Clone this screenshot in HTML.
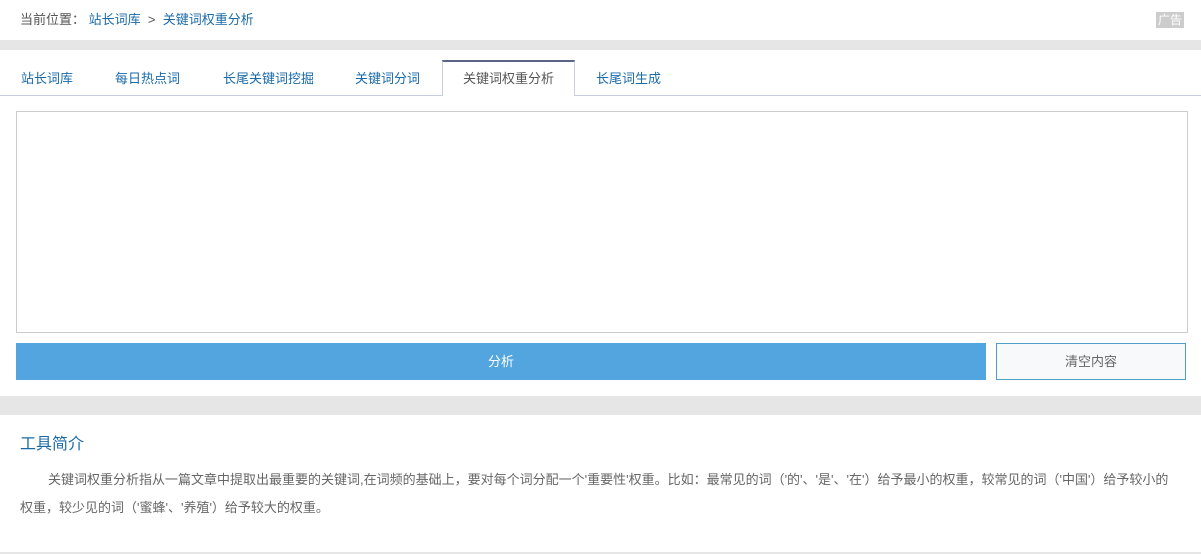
<!DOCTYPE html>
<html><head><meta charset="utf-8"><style>
*{margin:0;padding:0;box-sizing:border-box}
body{width:1201px;height:554px;background:#e6e6e6;font-family:"Liberation Sans","Noto Sans CJK SC",sans-serif;font-size:13px;position:relative;overflow:hidden}
.a{position:absolute}
.top{left:0;top:0;width:1201px;height:40px;background:#fff}
.bc{left:20px;top:9px;color:#555}
.bc span{color:#1a6aa8}
.ad{left:1156px;top:12px;width:28px;height:16px;background:#ccc;color:#fff;font-size:12px;line-height:16px;text-align:center}
.p1{left:0;top:50px;width:1201px;height:346px;background:#fff}
.tabline{left:0;top:95px;width:1201px;height:1px;background:#c8cfdc}
.tab{top:68px;color:#1a6aa8}
.act{left:442px;top:60px;width:133px;height:36px;background:#fff;border:1px solid #c8cfdc;border-top:2px solid #5b6584;border-bottom:none;color:#555;text-align:center;line-height:34px}
.ta{left:16px;top:111px;width:1172px;height:222px;border:1px solid #ccc}
.btn{left:16px;top:343px;width:970px;height:37px;background:#53a5e0;color:#fff;text-align:center;line-height:37px}
.clr{left:996px;top:343px;width:190px;height:37px;background:#f7f9fa;border:1px solid #4fa0c7;color:#666;text-align:center;line-height:35px}
.p2{left:0;top:415px;width:1201px;height:137px;background:#fff}
.h{left:20px;top:430px;font-size:16px;color:#1a6aa8}
.txt{left:20px;top:466px;width:1158px;color:#666;line-height:28px;text-indent:28px;font-size:13px}
</style></head><body>
<div class="a top"></div>
<div class="a bc">当前位置：&nbsp;<span>站长词库</span>&nbsp;&nbsp;&gt;&nbsp;&nbsp;<span>关键词权重分析</span></div>
<div class="a ad">广告</div>
<div class="a p1"></div>
<div class="a tabline"></div>
<div class="a tab" style="left:21px">站长词库</div>
<div class="a tab" style="left:115px">每日热点词</div>
<div class="a tab" style="left:223px">长尾关键词挖掘</div>
<div class="a tab" style="left:355px">关键词分词</div>
<div class="a act">关键词权重分析</div>
<div class="a tab" style="left:596px">长尾词生成</div>
<div class="a ta"></div>
<div class="a btn">分析</div>
<div class="a clr">清空内容</div>
<div class="a p2"></div>
<div class="a h">工具简介</div>
<div class="a txt">关键词权重分析指从一篇文章中提取出最重要的关键词,在词频的基础上，要对每个词分配一个'重要性'权重。比如：最常见的词（'的'、'是'、'在'）给予最小的权重，较常见的词（'中国'）给予较小的权重，较少见的词（'蜜蜂'、'养殖'）给予较大的权重。</div>
</body></html>
